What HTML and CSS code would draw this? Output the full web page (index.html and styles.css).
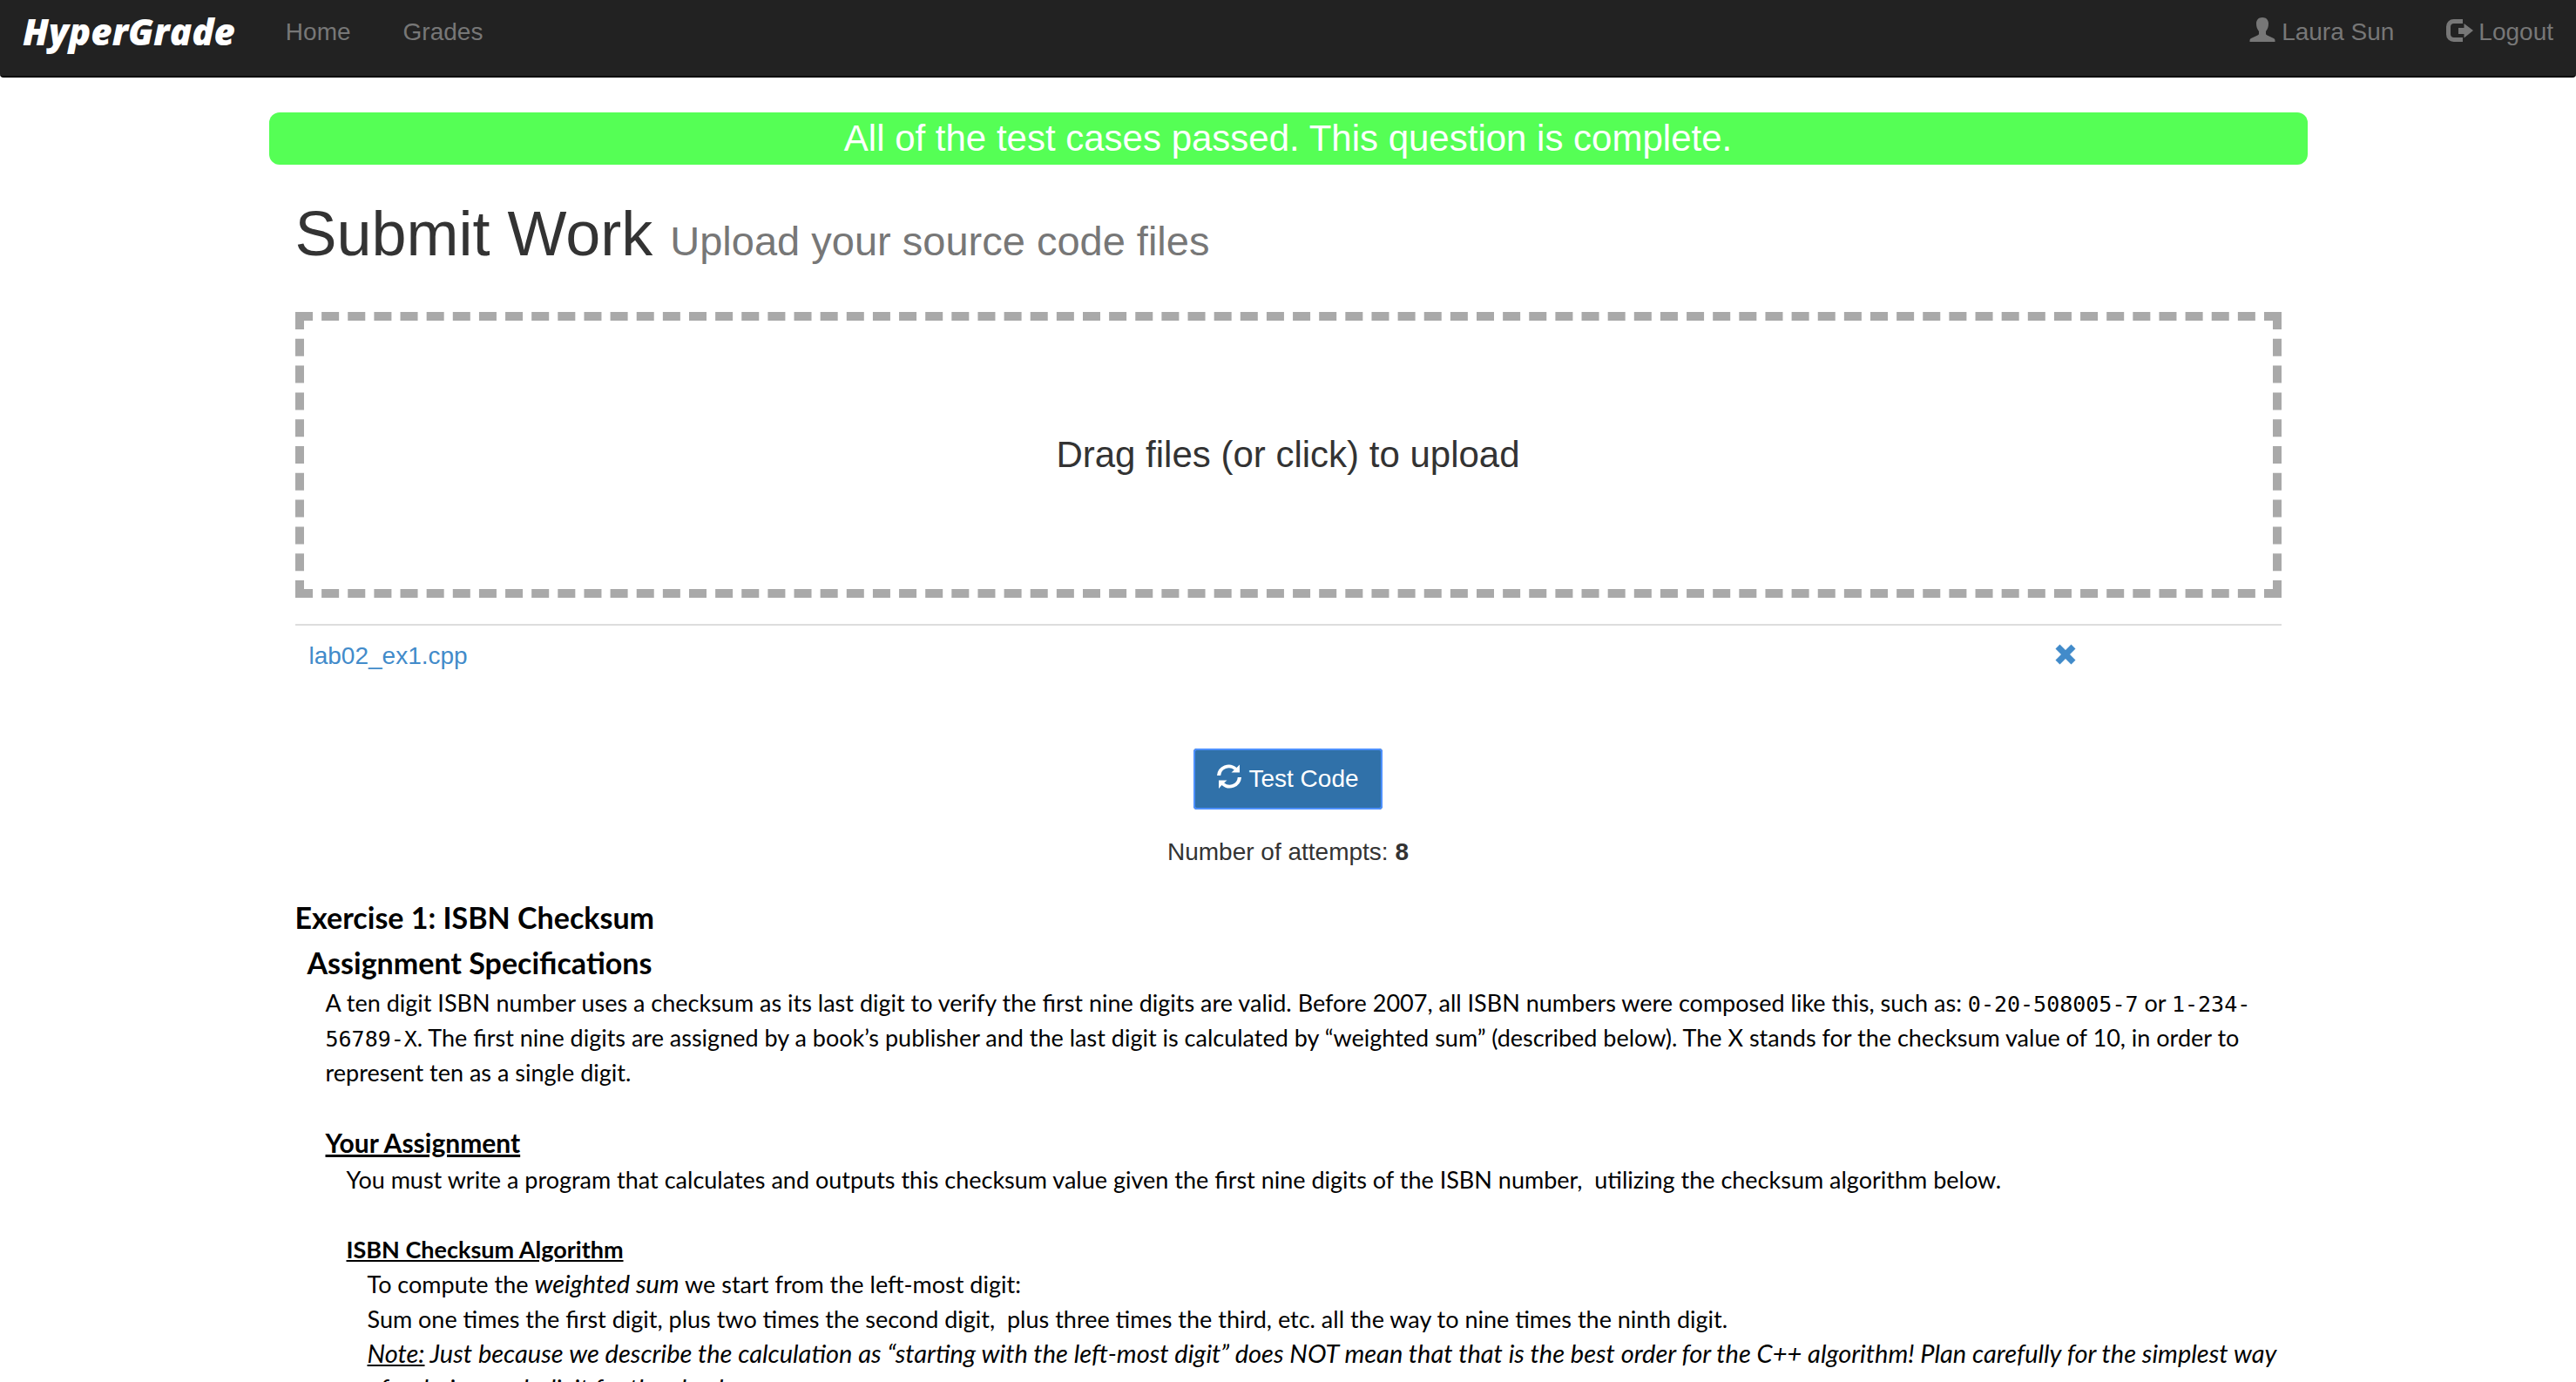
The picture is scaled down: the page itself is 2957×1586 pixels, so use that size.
FILE: index.html
```html
<!DOCTYPE html>
<html lang="en">
<head>
<meta charset="utf-8">
<title>HyperGrade</title>
<link rel="stylesheet" href="styles.css">
</head>
<body>
<header class="navbar">
  <a class="brand" href="#">HyperGrade</a>
  <nav class="nav-links">
    <a href="#">Home</a>
    <a href="#">Grades</a>
  </nav>
  <nav class="nav-links nav-user">
    <a href="#"><svg class="icon" viewBox="0 0 28 28" aria-hidden="true"><path d="M14 0c4.400 0 7 2.800 7 7 0 4-1 6.500-3 9v2.500c0 1 .5 1.500 1.500 2L27 24c1 .6 1.500 1.300 1.500 2.500V28h-29v-1.500C-.5 25.300 0 24.600 1 24l7.500-3.500c1-.5 1.500-1 1.500-2V16c-2-2.500-3-5-3-9 0-4.200 2.600-7 7-7z"/></svg>Laura Sun</a>
    <a href="#"><svg class="icon icon-logout" viewBox="0 0 31 28" aria-hidden="true"><path d="M19 2H8.500A8.500 8.500 0 0 0 0 10.500v9A8.500 8.500 0 0 0 8.500 28H19v-5H9a4 4 0 0 1-4-4v-8a4 4 0 0 1 4-4h10zM20.500 7v5H14v7h6.500v4.500L31 15z"/></svg>Logout</a>
  </nav>
</header>
<main class="content">
  <div class="container">
    <div class="alert" role="status">All of the test cases passed. This question is complete.</div>
    <div class="body">
      <h1 class="title">Submit Work <small>Upload your source code files</small></h1>
      <button class="dropzone" type="button">Drag files (or click) to upload</button>
      <table class="files">
        <tr>
          <td><a href="#">lab02_ex1.cpp</a></td>
          <td class="remove"><a href="#" aria-label="Remove lab02_ex1.cpp"><svg class="icon-x" viewBox="0 0 24 24" aria-hidden="true"><path d="M5.500.5 12 7 18.500.5l5 5L17 12l6.500 6.500-5 5L12 17l-6.500 6.500-5-5L7 12 .5 5.500z"/></svg></a></td>
        </tr>
      </table>
      <div class="actions">
        <button class="test" type="button"><svg class="icon" viewBox="0 0 28 28" aria-hidden="true"><path d="M0 13A13.500 13.500 0 0 1 22.500 4L26 .5V9.500H16.500L19.800 6.500A9.500 9.500 0 0 0 4.200 13zM28 15A13.500 13.500 0 0 1 5.500 24L2 28V18.500H11.500L8.200 21.500A9.500 9.500 0 0 0 23.800 15z"/></svg>Test Code</button>
        <p class="attempts">Number of attempts: <b>8</b></p>
      </div>
      <article class="doc">
        <h2>Exercise 1: ISBN Checksum</h2>
        <h3>Assignment Specifications</h3>
        <section class="level">
          <p>A ten digit ISBN number uses a checksum as its last digit to verify the first nine digits are valid. Before 2007, all ISBN numbers were composed like this, such as: <code>0-20-508005-7</code> or <code>1-234-<br>56789-X</code>. The first nine digits are assigned by a book’s publisher and the last digit is calculated by “weighted sum” (described below). The X stands for the checksum value of 10, in order to<br>represent ten as a single digit.</p>
          <h4>Your Assignment</h4>
          <div class="indent">
            <p>You must write a program that calculates and outputs this checksum value given the first nine digits of the ISBN number,&nbsp; utilizing the checksum algorithm below.</p>
            <h5>ISBN Checksum Algorithm</h5>
            <div class="indent">
              <p>To compute the <em>weighted sum</em> we start from the left-most digit:</p>
              <p>Sum one times the first digit, plus two times the second digit,&nbsp; plus three times the third, etc. all the way to nine times the ninth digit.</p>
              <p><em><u>Note:</u> Just because we describe the calculation as “starting with the left-most digit” does NOT mean that that is the best order for the C++ algorithm! Plan carefully for the simplest way<br>of ordering each digit for the checksum.</em></p>
            </div>
          </div>
        </section>
      </article>
    </div>
  </div>
</main>
</body>
</html>
```
FILE: styles.css
```css
* { box-sizing: border-box; }
body {
  margin: 0;
  height: 100vh;
  display: flex;
  flex-direction: column;
  background: #fff;
  color: #333;
  font: 28px/40px "Liberation Sans", Arial, sans-serif;
}
a { color: #428bca; text-decoration: none; }
.navbar {
  flex: none;
  display: flex;
  align-items: flex-start;
  height: 89px;
  padding: 16px 26px;
  background: #222;
  border-bottom: 2px solid #080808;
  border-radius: 0 0 4px 4px;
}
.brand {
  color: #fff;
  font: italic 800 42px/40px "Open Sans", sans-serif;
}
.nav-links { display: flex; gap: 60px; margin-left: 58px; padding-top: 1px; }
.nav-links a { color: #777; display: flex; }
.nav-user { margin-left: auto; }
.icon { width: 28px; height: 28px; margin: 3px 8px 0 0; fill: currentColor; overflow: visible; }
.icon-logout { width: 31px; margin-right: 6px; }
.content { flex: 1; min-height: 0; overflow-y: auto; scrollbar-width: none; padding-top: 40px; }
.container { max-width: 2340px; margin: 0 auto; }
.alert {
  background: #5f5;
  color: #fff;
  border-radius: 12px;
  text-align: center;
  font-size: 42px;
  line-height: 60px;
}
.body { padding: 0 30px; }
.title { margin: 39px 0 41px; font-weight: 400; font-size: 72px; line-height: 80px; }
.title small { font-size: 47px; color: #777; }
.dropzone {
  display: block;
  width: 100%;
  height: 328px;
  border: 10px dashed #a9a9a9;
  background: #fff;
  color: #333;
  font: 42px/60px "Liberation Sans", Arial, sans-serif;
}
.files { width: 100%; margin: 30px 0 72px; border-collapse: separate; border-spacing: 0; table-layout: fixed; border-top: 2px solid #ddd; }
.files td { padding: 15px 16px 14px; }
.files .remove { width: 12%; padding-top: 21px; padding-left: 14px; vertical-align: top; }
.icon-x { display: block; width: 24px; height: 24px; fill: currentColor; }
.actions { display: flex; flex-direction: column; align-items: center; }
.test {
  display: flex;
  justify-content: center;
  padding: 13px 25px;
  border: 2px solid #285e8e;
  border-radius: 4px;
  outline: 2px solid #4d90fe;
  outline-offset: -2px;
  background: #3071a9;
  color: #fff;
  font: 28px/40px "Liberation Sans", Arial, sans-serif;
}
.attempts { margin: 29px 0; }
.doc { color: #000; font-family: Lato, sans-serif; font-size: 27px; }
.doc p, .doc h2, .doc h3, .doc h4, .doc h5 { margin: 0; }
.doc h2, .doc h3 { font-size: 34px; line-height: 52px; }
.doc h3 { padding-left: 14px; }
.doc h4, .doc h5 { margin-top: 40px; text-decoration: underline; }
.doc h4 { margin-top: 38px; font-size: 30px; line-height: 45px; }
.doc h5 { font-size: 27px; }
.doc em { font-size: 29px; line-height: 1; }
.level { padding-left: 35px; }
.indent { padding-left: 24px; }
code { font-family: "DejaVu Sans Mono", monospace; font-size: 25px; line-height: 1; }
```
